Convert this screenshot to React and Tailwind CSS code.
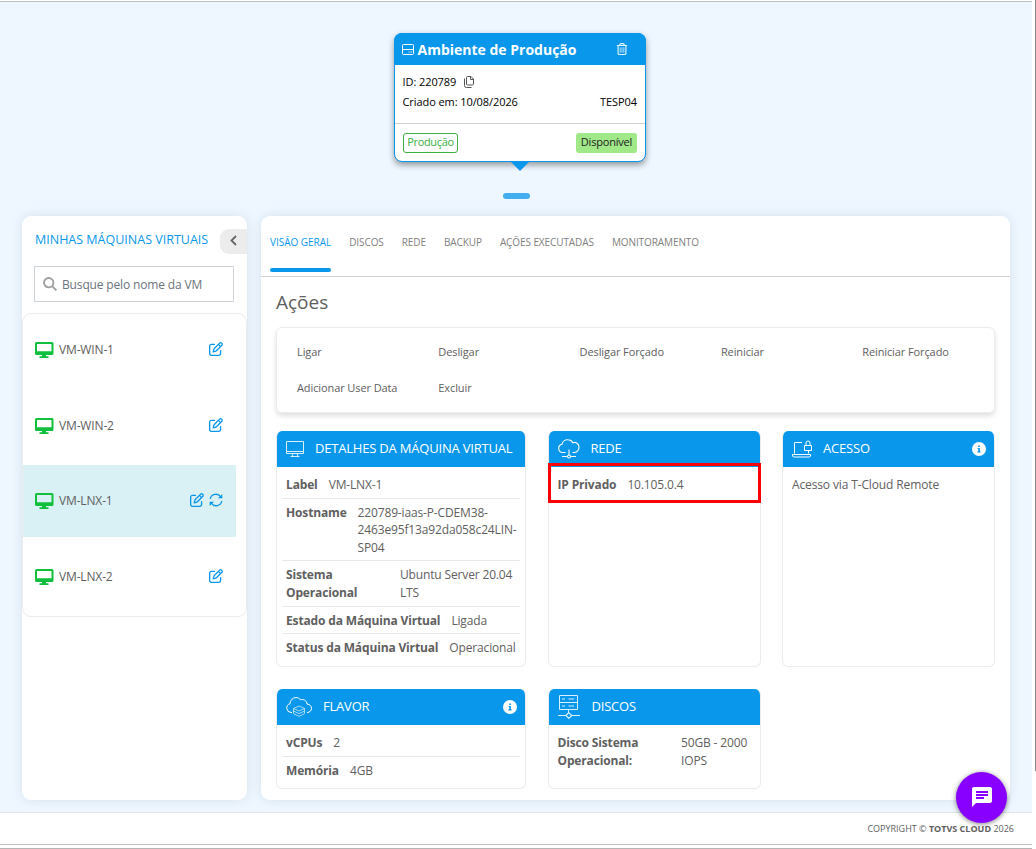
import React from "react";
import { FaRegPenToSquare, FaRegTrashCan } from "react-icons/fa6";
import { MdChat } from "react-icons/md";

const vms = [
  { name: "VM-WIN-1" },
  { name: "VM-WIN-2" },
  { name: "VM-LNX-1", active: true },
  { name: "VM-LNX-2" },
];

const tabs = ["VISÃO GERAL", "DISCOS", "REDE", "BACKUP", "AÇÕES EXECUTADAS", "MONITORAMENTO"];

const actions = [
  "Ligar",
  "Desligar",
  "Desligar Forçado",
  "Reiniciar",
  "Reiniciar Forçado",
  "Adicionar User Data",
  "Excluir",
];

const InfoIcon = () => (
  <svg width="14" height="14" viewBox="0 0 14 14" className="ml-auto shrink-0">
    <circle cx="7" cy="7" r="7" fill="white" />
    <path d="M6.2 3.4h1.7v1.6H6.2zM5.6 6h2.3v3.3h.7v1.1H5.4V9.3h.8V7.1h-.6z" fill="#0997eb" />
  </svg>
);

const RefreshIcon = () => (
  <svg width="14" height="14" viewBox="0 0 14 14" fill="none" stroke="currentColor" strokeWidth="1.3">
    <path d="M1.200 6A5.800 5.800 0 0 1 11.800 4M12.800 8A5.800 5.800 0 0 1 2.200 10" />
    <path d="M13.300 1v4.300H9zM.7 13V8.700H5z" fill="currentColor" stroke="none" />
  </svg>
);

const MonitorIcon = () => (
  <svg width="18" height="17" viewBox="0 0 18 17" fill="none" stroke="white" strokeWidth="1" opacity="0.85" className="shrink-0">
    <path d="M.5 .5h17v12H.5zM.5 10.5h17M7 12.5l-1 3h6l-1-3M4.5 15.5h9" />
  </svg>
);

const NetworkIcon = () => (
  <svg width="22" height="20" viewBox="0 0 22 20" fill="none" stroke="white" strokeWidth="1.1">
    <path d="M7.5 13.5H4.8A4.2 4.2 0 0 1 4 5.2 5.6 5.6 0 0 1 10 .8c2.2 0 3.800 1 4.800 2.900A4.600 4.600 0 0 1 21 8c0 3-2 5.500-4.500 5.500h-2M11 10.500v6M4 17.500h5.500M12.500 17.500H18" />
    <circle cx="11" cy="17.500" r="1.500" />
  </svg>
);

const AccessIcon = () => (
  <svg width="20" height="18" viewBox="0 0 20 18" fill="none" stroke="white" strokeWidth="1">
    <path d="M10 2.500H2.500v11M.5 14.500h18v1.500l-1 1h-16l-1-1zM12.500 5.500h7v5h-7zM14 5.500V3a2 2 0 0 1 4 0v2.500M16.500 10.500v3" />
  </svg>
);

const FlavorIcon = () => (
  <svg width="26" height="20" viewBox="0 0 26 20" fill="none" stroke="white" strokeWidth="1">
    <path d="M6 15.500H5A4.500 4.500 0 0 1 4 6.700 6 6 0 0 1 10 .6c2 0 3.500.6 4.500 2.200 3-1 6.300.8 6.500 4.200 3 .3 4.500 2.300 4.500 4.300 0 2.400-1.800 4.200-4.500 4.200" />
    <path d="M7.500 11.500 13 9l5.500 2.500L13 14zM7.500 14l5.500 2.600 5.500-2.600M7.500 16.600l5.500 2.700 5.500-2.700M7.500 11.500v5M18.500 11.500v5" strokeWidth=".8" opacity=".8" />
  </svg>
);

const ServerIcon = () => (
  <svg width="22" height="24" viewBox="0 0 22 24" fill="none" stroke="white" strokeWidth="1" opacity="0.85">
    <path d="M1.500.5h18v14h-18zM1.500 7.500h18M4 4h3M4 11h3M10.500 4h5.500M10.500 11h5.500M10.500 14.500v3.500M0 20.500h8M13.500 20.500H22" />
    <path d="M10.800 17.600l2.900 2.900-2.900 2.900-2.900-2.900z" strokeWidth="1.200" />
  </svg>
);

const Card = ({ icon, title, info, gap, children }) => (
  <div className="flex flex-col overflow-hidden rounded-md border border-t-0 border-[#ececec] bg-white">
    <div className={`-mx-px flex h-[36px] shrink-0 items-center bg-[#0997eb] pr-[9px] pl-[10px] text-[13px] tracking-[-0.2px] whitespace-nowrap text-white ${gap}`}>
      {icon}
      <span>{title}</span>
      {info && <InfoIcon />}
    </div>
    <div className="px-[5px] pt-1">{children}</div>
  </div>
);

const Row = ({ label, value, labelClass = "", last }) => (
  <div className={`flex gap-[11px] pt-[5px] pr-1 pb-1 pl-1 text-[12px] leading-[17.6px] ${last ? "" : "border-b border-[#e9e9e9]"}`}>
    <b className={`shrink-0 tracking-[-0.15px] ${labelClass}`}>{label}</b>
    <span className="min-w-0 tracking-[-0.15px]">{value}</span>
  </div>
);

const EnvironmentCard = () => (
  <div className="relative mt-[31px] ml-[394px] h-[129px] w-[252px] rounded-lg border border-[#0997eb] bg-white text-[11px] text-black shadow-[0_3px_6px_rgba(0,0,0,0.4)]">
    <div className="-mx-px -mt-px flex h-8 items-center rounded-t-lg bg-[#0997eb] pr-[18px] pl-2 text-white">
      <svg width="12" height="11" viewBox="0 0 12 11" fill="none" stroke="white" strokeWidth="1" className="mr-[3.5px]">
        <rect x=".5" y=".5" width="11" height="10" rx="1" />
        <path d="M.5 5.500h11M6.500 8h1M8.500 8h1.500" />
      </svg>
      <span className="text-[14px] font-bold">Ambiente de Produção</span>
      <FaRegTrashCan size={12} className="mb-px ml-auto opacity-90" />
    </div>
    <div className="flex h-[59px] flex-col border-b border-[#cfcfcf] pt-[7px] pr-2 pl-[7.5px] tracking-[-0.08px]">
      <div className="flex h-5 items-center gap-2">
        <span>ID: 220789</span>
        <svg width="10" height="12" viewBox="0 0 10 12" fill="none" stroke="#555" strokeWidth="1">
          <path d="M2.500 1.500a1 1 0 0 1 1-1H7l2.500 2.500v5a1 1 0 0 1-1 1h-5a1 1 0 0 1-1-1zM6.500.5V3.500h3M.5 2.500v7a2 2 0 0 0 2 2H7.500" />
        </svg>
      </div>
      <div className="flex h-5 items-center justify-between">
        <span>Criado em: 10/08/2026</span>
        <span>TESP04</span>
      </div>
    </div>
    <div className="flex items-center justify-between px-2 pt-[9px]">
      <span className="flex h-5 w-[55px] items-center justify-center rounded-[3px] border border-[#3cb043] pb-px tracking-[-0.35px] text-[#3cb043]">Produção</span>
      <span className="flex h-5 w-[61px] items-center justify-center rounded-[3px] bg-[#a0e888] pb-px tracking-[-0.2px] text-[#222]">Disponível</span>
    </div>
    <div className="absolute top-[128px] left-[116px] border-x-[9px] border-t-[9px] border-x-transparent border-t-[#0997eb]"></div>
  </div>
);

const Sidebar = () => (
  <aside className="flex w-[225px] shrink-0 flex-col rounded-[9px] bg-white shadow-[0_0_12px_rgba(0,40,80,0.1)]">
    <div className="flex h-[50px] items-center justify-between pl-[13px] text-[12.5px] text-[#0997eb]">
      <span className="-mt-px">MINHAS MÁQUINAS VIRTUAIS</span>
      <button className="flex h-[25px] w-[27px] items-center justify-center rounded-l-[9px] bg-[#ececec] pb-0.5">
        <svg width="7" height="11" viewBox="0 0 7 11" fill="none" stroke="#666" strokeWidth="1.800">
          <path d="M6 1 1.500 5.500 6 10" />
        </svg>
      </button>
    </div>
    <div className="mx-3 flex h-9 w-[200px] items-center gap-[5px] border border-[#ced4da] pl-2 text-[12px] tracking-[-0.15px] text-[#6c757d]">
      <svg width="14" height="14" viewBox="0 0 14 14" fill="none" stroke="#a0a0a0" strokeWidth="1.900">
        <circle cx="5.700" cy="5.700" r="4.700" />
        <path d="m9.200 9.200 4.200 4.200" />
      </svg>
      <span className="pt-0.5">Busque pelo nome da VM</span>
    </div>
    <div className="mt-[11px] flex h-[304px] flex-col gap-[3.6px] rounded-[9px] border border-[#ececec]">
      {vms.map((vm) => (
        <div
          key={vm.name}
          className={`flex h-[72px] w-[213px] shrink-0 items-center pr-[13.5px] pl-3 text-[12px] tracking-[-0.15px] ${vm.active ? "bg-[#d9f0f4]" : ""}`}
        >
          <svg width="19" height="16" viewBox="0 0 19 16" className="mr-[5px]">
            <path fill="#10bf3c" fillRule="evenodd" d="M1.500 0h15.500a1.500 1.500 0 0 1 1.500 1.500v10a1.500 1.500 0 0 1-1.500 1.500h-6v1.200h2.500v1.800H4.500v-1.800H7V13H1.500A1.500 1.500 0 0 1 0 11.500v-10A1.500 1.500 0 0 1 1.500 0zM2 2v7.200h14.500V2z" />
          </svg>
          <span>{vm.name}</span>
          <span className="mb-0.5 ml-auto flex gap-[5px] text-[#0997eb]">
            <FaRegPenToSquare size={14} />
            {vm.active && <RefreshIcon />}
          </span>
        </div>
      ))}
    </div>
  </aside>
);

const Overview = () => (
  <main className="w-[749px] rounded-[9px] bg-white shadow-[0_0_12px_rgba(0,40,80,0.1)]">
    <nav className="flex h-[61px] items-end gap-[18px] border-b border-[#cfd0d0] pb-1 pl-[9px] text-[10px] tracking-[-0.09px] text-[#808080]">
      {tabs.map((tab, i) => (
        <span key={tab} className={`h-[37px] ${i === 0 ? "tracking-[-0.03px] text-[#0997eb]" : ""}`}>
          {tab}
          {i === 0 && <i className="mt-[18px] block h-1 rounded-full bg-[#0997eb]"></i>}
        </span>
      ))}
    </nav>
    <div className="pt-3 pl-[15px]">
      <h2 className="text-[19px] leading-[27px]">Ações</h2>
      <div className="mt-[11px] grid h-[86px] w-[719px] grid-cols-[141.3px_141.3px_141.3px_141.3px_1fr] grid-rows-[36px_36px] rounded-md border border-[#ececec] pt-[6px] pl-5 text-[11px] tracking-[-0.1px] shadow-[0_3px_5px_rgba(0,0,0,0.13)]">
        {actions.map((action) => (
          <span key={action} className="flex items-center">{action}</span>
        ))}
      </div>
      <div className="mt-[18px] grid grid-cols-[250px_213px_213px] grid-rows-[236px_100px] gap-x-[21.500px] gap-y-[22px]">
        <Card icon={<MonitorIcon />} title="DETALHES DA MÁQUINA VIRTUAL" gap="gap-[11px]">
          <Row label="Label" value="VM-LNX-1" />
          <Row label="Hostname" value={<>220789-iaas-P-CDEM38-<br />2463e95f13a92da058c24LIN-<br />SP04</>} />
          <Row label={<>Sistema<br />Operacional</>} labelClass="w-[103px]" value={<>Ubuntu Server 20.04<br />LTS</>} />
          <Row label="Estado da Máquina Virtual" value="Ligada" />
          <Row label="Status da Máquina Virtual" value="Operacional" last />
        </Card>
        <div className="relative grid">
          <Card icon={<NetworkIcon />} title="REDE" gap="gap-[11px]">
            <Row label="IP Privado" value="10.105.0.4" last />
          </Card>
          <div className="absolute top-[32px] left-0 h-[40px] w-[213px] border-3 border-[#fb0007]"></div>
        </div>
        <Card icon={<AccessIcon />} title="ACESSO" info gap="gap-[11px]">
          <div className="pt-[5px] pl-1 text-[12px] leading-[17.6px] tracking-[-0.13px]">Acesso via T-Cloud Remote</div>
        </Card>
        <Card icon={<FlavorIcon />} title="FLAVOR" info gap="gap-[11px]">
          <Row label="vCPUs" value="2" />
          <Row label="Memória" value="4GB" last />
        </Card>
        <Card icon={<ServerIcon />} title="DISCOS" gap="gap-[12px]">
          <Row label={<>Disco Sistema<br />Operacional:</>} labelClass="w-[112.5px]" value={<>50GB - 2000<br />IOPS</>} last />
        </Card>
      </div>
    </div>
  </main>
);

const App = () => (
  <div className="flex h-[849px] w-[1036px] overflow-hidden bg-white font-['Open_Sans',sans-serif] text-[#606060]">
    <div className="flex w-[1032px] flex-col pt-px">
      <div className="flex h-[812px] flex-col border-t border-b border-t-[#bcbfc2] border-b-[#dfe5ea] bg-[#eef7ff]">
        <EnvironmentCard />
        <div className="mt-[31px] h-[6px] w-[27px] self-center rounded-full bg-[#43aeef]"></div>
        <div className="mt-[17px] ml-[22px] flex h-[584px] gap-[14px]">
          <Sidebar />
          <Overview />
        </div>
      </div>
      <footer className="flex h-[31px] items-center justify-end pr-[18px] text-[9px]">
        <span>COPYRIGHT © <b>TOTVS CLOUD</b> 2026</span>
      </footer>
      <div className="h-[4px] border-t border-[#c2c2c2]"></div>
      <div className="h-px bg-[#b5b5b5]"></div>
    </div>
    <div className="ml-auto h-[771px] w-px bg-[#8a8a8a]"></div>
    <button className="absolute top-[772px] left-[956px] flex h-[51px] w-[51px] items-center justify-center rounded-full bg-[#8800ff] pb-px text-white shadow-[0_1px_5px_rgba(0,0,0,0.5)]">
      <MdChat size={24} />
    </button>
  </div>
);

export default App;
